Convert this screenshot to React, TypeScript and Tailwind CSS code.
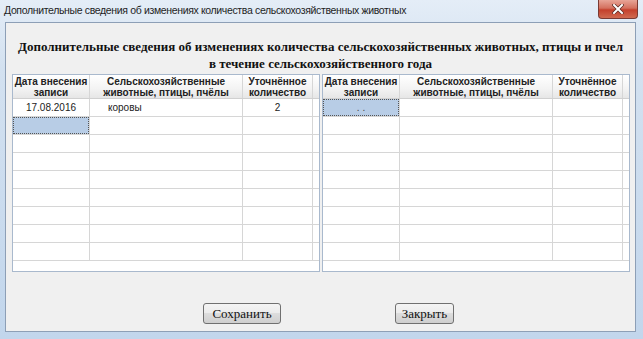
const cols = ["w-[77px]", "w-[153px]", "w-[70px]"];

type Cell = { text?: string; selected?: boolean; align?: string };

function Grid({ rows }: { rows: Cell[][] }) {
  return (
    <div className="w-[308px] h-[198px] border border-[#a9b9cd] bg-white">
      <div className="flex h-[24px] border-b border-[#d0d0d0] bg-[linear-gradient(#ffffff,#f3f3f3_60%,#e6e6e6)]">
        <div className={`${cols[0]} border-r border-[#d6d6d6] flex flex-col items-center justify-center leading-[11px]`}>
          <span>Дата внесения</span>
          <span>записи</span>
        </div>
        <div className={`${cols[1]} border-r border-[#d6d6d6] flex flex-col items-center justify-center leading-[11px]`}>
          <span>Сельскохозяйственные</span>
          <span>животные, птицы, пчёлы</span>
        </div>
        <div className={`${cols[2]} border-r border-[#d6d6d6] flex flex-col items-center justify-center leading-[11px]`}>
          <span>Уточнённое</span>
          <span>количество</span>
        </div>
      </div>
      {rows.map((row, i) => (
        <div key={i} className="flex h-[18px] border-b border-[#d6d6d6] font-normal">
          {row.map((c, j) => (
            <div
              key={j}
              className={`${cols[j]} border-r border-[#d6d6d6] flex items-center text-[10px] ${c.align ?? "justify-center"}`}
            >
              {c.selected ? (
                <div className="w-full h-full bg-[#b8cde6] border border-dotted border-[#555] flex items-center justify-center text-[#444]">
                  {c.text}
                </div>
              ) : (
                c.text
              )}
            </div>
          ))}
        </div>
      ))}
    </div>
  );
}

const empty = (): Cell[] => [{}, {}, {}];

export default function App() {
  const left: Cell[][] = [
    [{ text: "17.08.2016" }, { text: "коровы", align: "justify-start pl-[18px]" }, { text: "2" }],
    [{ selected: true }, {}, {}],
    ...Array.from({ length: 7 }, empty),
  ];
  const right: Cell[][] = [
    [{ selected: true, text: ". ." }, {}, {}],
    ...Array.from({ length: 8 }, empty),
  ];

  return (
    <div className="w-[643px] h-[339px] overflow-hidden bg-[linear-gradient(#e4edf7,#d3e1f0_20%,#c2d6ec)] pl-[5px] pr-[7px] pb-[7px] flex flex-col font-['Liberation_Sans',sans-serif] text-[#1b1b1b]">
      <div className="h-[22px] relative flex items-center">
        <span className="text-[10.5px] tracking-[-0.35px] text-[#1e1e1e] -ml-[1px] -mt-[1px]">
          Дополнительные сведения об изменениях количества сельскохозяйственных животных
        </span>
        <div className="absolute right-[-2px] top-0 w-[40px] h-[19px] rounded-b-[4px] border border-[#7a3a33] border-t-0 bg-[linear-gradient(#e8a597,#d4705e_45%,#c4402c_55%,#d06a50)] flex items-center justify-center">
          <svg width="12" height="10" viewBox="0 0 12 10">
            <path d="M2 1 L10 9 M10 1 L2 9" stroke="#5a2a22" strokeWidth="3.4" strokeLinecap="square" />
            <path d="M2 1 L10 9 M10 1 L2 9" stroke="#ffffff" strokeWidth="2" strokeLinecap="square" />
          </svg>
        </div>
      </div>
      <div className="flex-1 border border-[#8d9fb6] bg-[#f0f0f0] flex flex-col">
        <div className="pt-[15px] text-center font-['Liberation_Serif',serif] font-bold text-[13px] leading-[17px] text-[#111]">
          <div>Дополнительные сведения об изменениях количества сельскохозяйственных животных, птицы и пчел</div>
          <div>в течение сельскохозяйственного года</div>
        </div>
        <div className="flex gap-[2px] pl-[6px] mt-[2px] text-[10px] font-bold text-[#222]">
          <Grid rows={left} />
          <Grid rows={right} />
        </div>
        <div className="flex gap-[114px] pl-[197px] mt-[31px] font-['Liberation_Serif',serif] text-[13px]">
          <button className="w-[78px] h-[21px] rounded-[3px] border border-[#707070] bg-[linear-gradient(#f4f4f4,#ebebeb_50%,#dddddd_50%,#cfcfcf)] text-[#111]">
            Сохранить
          </button>
          <button className="w-[59px] h-[21px] rounded-[3px] border border-[#707070] bg-[linear-gradient(#f4f4f4,#ebebeb_50%,#dddddd_50%,#cfcfcf)] text-[#111]">
            Закрыть
          </button>
        </div>
      </div>
    </div>
  );
}
